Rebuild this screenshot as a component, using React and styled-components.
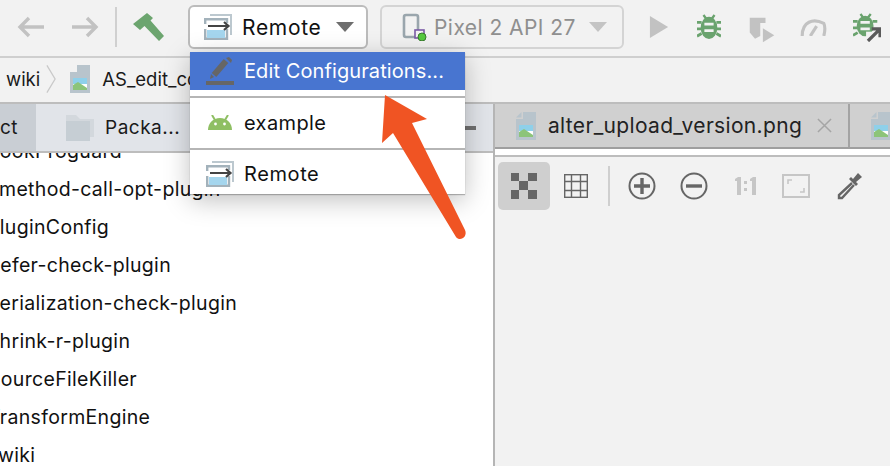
import React from "react";
import styled, { createGlobalStyle } from "styled-components";

const Global = createGlobalStyle`
  html, body { margin: 0; padding: 0; background: #f2f2f2; }
  #root { width: 890px; height: 466px; overflow: hidden; }
  * { box-sizing: border-box; }
`;
const FONT = `"Inter", "Liberation Sans", sans-serif`;

const Page = styled.div`
  position: relative; width: 890px; height: 466px; overflow: hidden;
  background: #f2f2f2; font-family: ${FONT}; color: #1a1a1a;
  display: flex; flex-direction: column;
`;
const Toolbar = styled.div`
  height: 58px; flex: none; display: flex; align-items: center;
  border-bottom: 2px solid #cfcfcf; padding: 0 0 2px 17px;
`;
const ToolIcon = styled.svg`
  flex: none; display: block; margin-left: ${p => p.$ml || 0}px; margin-top: ${p => p.$mt || 0}px;
`;
const Sep = styled.div`
  width: 2px; height: 40px; background: #d0d0d0; margin: 0 16px 0 ${p => p.$ml || 0}px; flex: none;
`;
const Combo = styled.div`
  flex: none; height: 44px; width: ${p => p.$w}px; margin-left: ${p => p.$ml}px;
  border: 2px solid ${p => p.$muted ? "#d4d4d4" : "#bcbcbc"}; border-radius: 6px;
  background: ${p => p.$muted ? "#f2f2f2" : "#fff"};
  display: flex; align-items: center; padding-left: ${p => p.$pl}px;
`;
const ComboLabel = styled.span`
  font-size: 21px; letter-spacing: ${p => p.$muted ? 0.45 : 0.7}px; margin-left: ${p => p.$ml}px; white-space: nowrap;
  color: ${p => p.$muted ? "#8f8f8f" : "#111"};
`;
const Caret = styled.div`
  width: 0; height: 0; margin-left: ${p => p.$ml}px;
  border-left: 9px solid transparent; border-right: 9px solid transparent;
  border-top: 10px solid ${p => p.$muted ? "#c4c4c4" : "#6e6e6e"};
`;
const Breadcrumb = styled.div`
  height: 46px; flex: none; display: flex; align-items: center; padding: 0 0 3px 6px;
  font-size: 18.5px; border-bottom: 2px solid #bdbdbd;
`;
const CrumbText = styled.span`
  white-space: nowrap; margin-left: ${p => p.$ml || 0}px;
`;
const Body = styled.div`
  flex: 1; display: flex; min-height: 0;
`;
const LeftPane = styled.div`
  width: 495px; flex: none; border-right: 2px solid #b5b5b5; background: #fff;
  display: flex; flex-direction: column; overflow: hidden;
`;
const PaneTabs = styled.div`
  height: 49px; flex: none; display: flex; background: #e1e4e9;
  border-bottom: 2px solid #bdbdbd; font-size: 19px; letter-spacing: 0.5px;
`;
const ActiveStub = styled.div`
  width: 36px; flex: none; background: #c9ced4; display: flex; align-items: center;
  overflow: hidden;
`;
const PackTab = styled.div`
  display: flex; align-items: center; padding-left: 30px; gap: 11px; flex: 1; position: relative;
`;
const Minus = styled.div`
  position: absolute; right: 17px; top: 22px; width: 14px; height: 4px; background: #707070;
`;
const TreeViewport = styled.div`
  flex: 1; min-height: 0; overflow: hidden;
`;
const Tree = styled.div`
  margin-top: -21px; display: flex; flex-direction: column; font-size: 19.5px; letter-spacing: 0.32px; color: #111;
`;
const TreeRow = styled.div`
  height: 38px; flex: none; line-height: 38px; white-space: nowrap; margin-left: ${p => p.$off}px;
`;
const RightPane = styled.div`
  flex: 1; display: flex; flex-direction: column; min-width: 0;
`;
const FileTabs = styled.div`
  height: 45px; flex: none; display: flex; background: #d0d0d0;
  border-bottom: 2px solid #9f9f9f; overflow: hidden;
`;
const FileTab = styled.div`
  flex: none; width: ${p => p.$w}px; padding-left: 21px; display: flex; align-items: center;
  border-right: ${p => p.$last ? "none" : "2px solid #a3a3a3"}; font-size: 21px; letter-spacing: 0.33px; color: #222;
`;
const FileName = styled.span`
  margin-left: 12px; white-space: nowrap;
`;
const Close = styled.span`
  margin-left: 15px; display: flex;
`;
const WhiteStrip = styled.div`
  height: 8px; flex: none; background: #fff; border-bottom: 2px solid #bdbdbd;
`;
const ImageBar = styled.div`
  display: flex; align-items: center; padding: 5px 0 0 3px; height: 53px; flex: none;
`;
const ToolBtn = styled.div`
  width: ${p => p.$w || 52}px; height: 48px; border-radius: 5px; flex: none;
  background: ${p => p.$on ? "#cfcfcf" : "transparent"};
  display: flex; align-items: center; justify-content: center;
`;
const BarSep = styled.div`
  width: 2px; height: 40px; background: #cfcfcf; margin: 0 6px 0 6px; flex: none;
`;
const Menu = styled.div`
  position: absolute; left: 190px; top: 52px; width: 275px; height: 142px; background: #fff;
  box-shadow: 0 1px 1px rgba(0,0,0,.25), 0 6px 24px rgba(0,0,0,.25);
  display: flex; flex-direction: column; font-size: 20px; letter-spacing: 0.1px;
`;
const MenuItem = styled.div`
  height: ${p => p.$h}px; flex: none; display: flex; align-items: center; padding: ${p => p.$pt || 0}px 0 0 16px; gap: 10px;
  background: ${p => p.$on ? "#4875d0" : "transparent"};
  color: ${p => p.$on ? "#fff" : "#111"};
  white-space: nowrap;
`;
const MenuLabel = styled.span`
  letter-spacing: ${p => p.$ls || 0.1}px;
`;
const MenuIconSlot = styled.span`
  display: flex; width: 28px; padding-left: 2px; flex: none;
`;
const MenuRule = styled.div`
  height: 2px; background: #b5b5b5; flex: none;
`;
const MenuGap = styled.div`
  height: 6px; flex: none;
`;
const ArrowOverlay = styled.svg`
  position: absolute; left: 370px; top: 90px; pointer-events: none;
`;

const FileIcon = () => (
  <ToolIcon width="20" height="28" viewBox="0 0 20 28">
    <path d="M7 0H20V28H0V7H7Z" fill="#b8c4cc" />
    <path d="M0 5.5L5.5 0V5.5Z" fill="#b8c4cc" />
    <rect x="3" y="13" width="14" height="12" fill="#fff" />
    <rect x="3" y="13" width="14" height="6" fill="#8ed0ea" />
    <path d="M3 25V20L8 17L17 23V25Z" fill="#8cc47a" />
  </ToolIcon>
);
const RemoteIcon = () => (
  <ToolIcon width="28" height="26" viewBox="0 0 28 26">
    <path d="M6 1H27V21" fill="none" stroke="#bcc8cf" strokeWidth="2" />
    <path d="M1.2 10V5.2H23V9M23 15V24.8H1.2V15" fill="none" stroke="#a3b2bb" strokeWidth="2.4" />
    <rect x="3" y="16" width="18" height="8" fill="#a5d6ee" />
    <path d="M4 12H24M20 8L24.5 12L20 16" fill="none" stroke="#444" strokeWidth="2.2" />
  </ToolIcon>
);
const AndroidIcon = () => (
  <ToolIcon width="24" height="16" viewBox="0 0 24 16">
    <path d="M0 15C0 8 5 3 12 3S24 8 24 15Z" fill="#8fbf63" />
    <path d="M4 0L7 5M20 0L17 5" stroke="#8fbf63" strokeWidth="2" />
    <circle cx="7.5" cy="9" r="1.4" fill="#fff" /><circle cx="16.5" cy="9" r="1.4" fill="#fff" />
  </ToolIcon>
);
const Bug = ({ ml }) => (
  <ToolIcon $ml={ml} width="24" height="28" viewBox="0 0 26 28">
    <path d="M7 1L10 5M19 1L16 5" stroke="#6aa36e" strokeWidth="2.5" />
    <path d="M0 9H5M21 9H26M0 16H5M21 16H26M0 24L5 21M26 24L21 21" stroke="#6aa36e" strokeWidth="3" />
    <ellipse cx="13" cy="15" rx="9" ry="12" fill="#6aa36e" />
    <path d="M8 11H18M8 18H18" stroke="#f2f2f2" strokeWidth="3" />
  </ToolIcon>
);

const tree = [
  ["method-call-opt-plugin", -1],
  ["PluginConfig", -13],
  ["defer-check-plugin", -12],
  ["serialization-check-plugin", -11],
  ["shrink-r-plugin", -11],
  ["SourceFileKiller", -12],
  ["TransformEngine", -12],
  ["wiki", -2],
];

export default function App() {
  return (
    <Page>
      <Global />
      <Toolbar>
        <ToolIcon width="28" height="22" viewBox="0 0 28 22">
          <path d="M27 11H3M12 2L3 11L12 20" fill="none" stroke="#c2c2c2" strokeWidth="3.4" />
        </ToolIcon>
        <ToolIcon $ml={26} width="28" height="22" viewBox="0 0 28 22">
          <path d="M1 11H25M16 2L25 11L16 20" fill="none" stroke="#c2c2c2" strokeWidth="3.4" />
        </ToolIcon>
        <Sep $ml={16} />
        <ToolIcon width="32" height="30" viewBox="0 0 32 30">
          <path d="M0 12L14 1L20 6L17.5 8.5L31 24L26 29L11.5 14L7 18Z" fill="#6ca56f" />
        </ToolIcon>
        <Combo $w={180} $ml={23} $pl={14}>
          <RemoteIcon />
          <ComboLabel $ml={10}>Remote</ComboLabel>
          <Caret $ml={14} />
        </Combo>
        <Combo $w={244} $ml={12} $muted $pl={20}>
          <ToolIcon width="26" height="28" viewBox="0 0 26 28">
            <rect x="2" y="2" width="14" height="22" rx="2" fill="none" stroke="#9aa6ad" strokeWidth="2.6" />
            <rect x="13" y="17" width="9" height="8" fill="#f2f2f2" stroke="#7b5aa6" strokeWidth="1.6" />
            <circle cx="20" cy="24" r="4" fill="#56c93e" stroke="#3a7a30" strokeWidth="1" />
          </ToolIcon>
          <ComboLabel $muted $ml={6}>Pixel 2 API 27</ComboLabel>
          <Caret $muted $ml={13} />
        </Combo>
        <ToolIcon $ml={25} width="20" height="26" viewBox="0 0 22 26">
          <path d="M1 1L21 13L1 25Z" fill="#c2c2c2" />
        </ToolIcon>
        <Bug ml={28} />
        <ToolIcon $ml={26} $mt={3} width="30" height="28" viewBox="0 0 32 32">
          <path d="M2 3H20V9H14V24L8 27L2 20Z" fill="#c2c2c2" />
          <path d="M17 15L30 23L17 31Z" fill="#c2c2c2" />
        </ToolIcon>
        <ToolIcon $ml={22} width="28" height="18" viewBox="0 0 28 20">
          <path d="M2 20C2 4 14 0 26 6C28 10 27 16 26 20" fill="none" stroke="#c2c2c2" strokeWidth="3.5" />
          <path d="M11 20L18 9" stroke="#c2c2c2" strokeWidth="3.5" />
        </ToolIcon>
        <ToolIcon $ml={26} width="28" height="30" viewBox="0 0 30 30">
          <path d="M8 1L11 5M19 1L16 5" stroke="#6aa36e" strokeWidth="2.5" />
          <path d="M0 9H5M21 9H26M0 16H5M0 24L5 21" stroke="#6aa36e" strokeWidth="3" />
          <ellipse cx="13" cy="14" rx="9" ry="11" fill="#6aa36e" />
          <path d="M8 10H18M8 17H18" stroke="#f2f2f2" strokeWidth="3" />
          <path d="M14 20H29V30H14Z" fill="#f2f2f2" />
          <path d="M20 17H29V26M28 18L16 30" fill="none" stroke="#5a5a5a" strokeWidth="3.5" />
        </ToolIcon>
      </Toolbar>
      <Breadcrumb>
        <CrumbText>wiki</CrumbText>
        <ToolIcon $ml={6} width="10" height="30" viewBox="0 0 11 30">
          <path d="M1 0L10 15L1 30" fill="none" stroke="#c9c9c9" strokeWidth="1.4" />
        </ToolIcon>
        <ToolIcon $ml={14} width="20" height="28" viewBox="0 0 20 28">
          <path d="M7 0H20V28H0V7H7Z" fill="#b8c4cc" />
          <rect x="3" y="13" width="14" height="12" fill="#fff" />
          <rect x="3" y="13" width="14" height="6" fill="#8ed0ea" />
          <path d="M3 25V20L8 17L17 23V25Z" fill="#8cc47a" />
        </ToolIcon>
        <CrumbText $ml={12}>AS_edit_co</CrumbText>
      </Breadcrumb>
      <Body>
        <LeftPane>
          <PaneTabs>
            <ActiveStub>ct</ActiveStub>
            <PackTab>
              <ToolIcon width="28" height="26" viewBox="0 0 28 26">
                <path d="M0 0H10L14 4H28V22H24V7H0Z" fill="#d3d8dd" />
                <path d="M0 6H24V26H0Z" fill="#c6ced4" />
              </ToolIcon>
              Packa...
              <Minus />
            </PackTab>
          </PaneTabs>
          <TreeViewport>
            <Tree>
              <TreeRow $off={-12}>hookProguard</TreeRow>
              {tree.map(([t, o]) => <TreeRow key={t} $off={o}>{t}</TreeRow>)}
            </Tree>
          </TreeViewport>
        </LeftPane>
        <RightPane>
          <FileTabs>
            <FileTab $w={355}>
              <FileIcon />
              <FileName>alter_upload_version.png</FileName>
              <Close>
                <svg width="15" height="15" viewBox="0 0 16 16"><path d="M1 1L15 15M15 1L1 15" stroke="#a5a5a5" strokeWidth="1.6" /></svg>
              </Close>
            </FileTab>
            <FileTab $w={60} $last><FileIcon /></FileTab>
          </FileTabs>
          <WhiteStrip />
          <ImageBar>
            <ToolBtn $on>
              <svg width="26" height="26" viewBox="0 0 26 26" fill="#666">
                <rect x="0" y="0" width="8" height="8" /><rect x="17" y="0" width="9" height="8" />
                <rect x="8" y="8" width="9" height="9" />
                <rect x="0" y="17" width="8" height="9" /><rect x="17" y="17" width="9" height="9" />
              </svg>
            </ToolBtn>
            <ToolBtn>
              <svg width="24" height="24" viewBox="0 0 24 24" fill="none" stroke="#666" strokeWidth="1.4">
                <rect x=".7" y=".7" width="22.6" height="22.6" />
                <path d="M7.5 1V23M16.5 1V23M1 7.5H23M1 16.5H23" />
              </svg>
            </ToolBtn>
            <BarSep />
            <ToolBtn>
              <svg width="28" height="28" viewBox="0 0 28 28" fill="none" stroke="#666">
                <circle cx="14" cy="14" r="12.5" strokeWidth="2" />
                <path d="M6 14H22M14 6V22" strokeWidth="3.4" />
              </svg>
            </ToolBtn>
            <ToolBtn>
              <svg width="28" height="28" viewBox="0 0 28 28" fill="none" stroke="#666">
                <circle cx="14" cy="14" r="12.5" strokeWidth="2" />
                <path d="M6 14H22" strokeWidth="3.4" />
              </svg>
            </ToolBtn>
            <ToolBtn $w={50}>
              <svg width="24" height="20" viewBox="0 0 24 20" fill="#c6c6c6">
                <path d="M2 3L5 1H8V19H4V5H2Z" /><rect x="11" y="5" width="3" height="3" /><rect x="11" y="12" width="3" height="3" />
                <path d="M17 3L20 1H23V19H19V5H17Z" />
              </svg>
            </ToolBtn>
            <ToolBtn>
              <svg width="28" height="24" viewBox="0 0 28 24" fill="none" stroke="#c6c6c6">
                <rect x="1" y="1" width="26" height="22" strokeWidth="2" />
                <path d="M6 10V6H10M22 14V18H18" strokeWidth="1.6" />
              </svg>
            </ToolBtn>
            <ToolBtn $w={54}>
              <svg width="28" height="28" viewBox="0 0 28 28">
                <path d="M17 11L4 23V26H7L19 13" fill="none" stroke="#666" strokeWidth="2.4" />
                <path d="M14 7L21 14L23 12L21 10L27 5L23 1L18 7L16 5Z" fill="#666" />
              </svg>
            </ToolBtn>
          </ImageBar>
        </RightPane>
      </Body>
      <Menu>
        <MenuItem $on $h={38}>
          <ToolIcon width="28" height="28" viewBox="0 0 28 28">
            <path d="M8 18L20 4" stroke="#666" strokeWidth="6" />
            <path d="M20 1L23 0L26 3L25 6Z" fill="#666" />
            <path d="M4 22L5 17L8 20Z" fill="#666" />
            <rect x="0" y="24" width="28" height="4" fill="#666" />
          </ToolIcon>
          <MenuLabel>Edit Configurations...</MenuLabel>
        </MenuItem>
        <MenuGap />
        <MenuRule />
        <MenuItem $h={50}>
          <MenuIconSlot><AndroidIcon /></MenuIconSlot>
          <MenuLabel $ls={0.4}>example</MenuLabel>
        </MenuItem>
        <MenuRule />
        <MenuItem $h={44} $pt={3}>
          <RemoteIcon />
          <MenuLabel $ls={0.6}>Remote</MenuLabel>
        </MenuItem>
      </Menu>
      <ArrowOverlay width="110" height="160" viewBox="370 90 110 160">
        <path d="M385 95L427 119L412 123L465 230C468 237 460 242 456 237L393 133L382 143Z" fill="#f05423" />
      </ArrowOverlay>
    </Page>
  );
}
